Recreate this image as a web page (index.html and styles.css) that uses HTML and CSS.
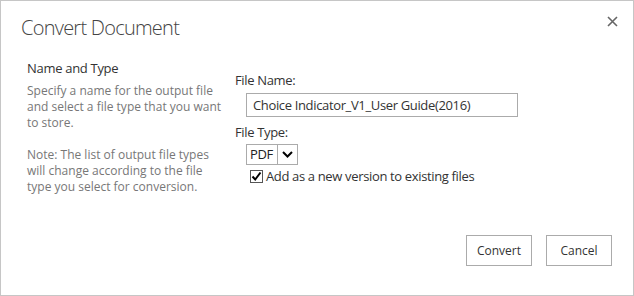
FILE: index.html
```html
<!DOCTYPE html>
<html lang="en">
<head>
  <meta charset="utf-8">
  <title>Convert Document</title>
  <link rel="stylesheet" href="styles.css">
</head>
<body>
  <div class="dialog">
    <!-- Header -->
    <div class="dialog-header">
      <h1>Convert Document</h1>
      <button class="close" type="button" aria-label="Close">
        <svg width="11" height="11" viewBox="0 0 11 11"><path d="M1 1L10 10M10 1L1 10" stroke="#666" stroke-width="1.6"/></svg>
      </button>
    </div>

    <!-- Body -->
    <div class="dialog-body">
      <div class="section-info">
        <h2>Name and Type</h2>
        <p>Specify a name for the output file and select a file type that you want to store.</p>
        <p>Note: The list of output file types will change according to the file type you select for conversion.</p>
      </div>
      <div class="section-fields">
        <label class="field-label" for="file-name">File Name:</label>
        <input id="file-name" class="text-input" type="text" value="Choice Indicator_V1_User Guide(2016)">
        <label class="field-label" for="file-type">File Type:</label>
        <div class="select">
          <span class="select-value">PDF</span>
          <span class="select-arrow">
            <svg width="11" height="7" viewBox="0 0 11 7"><path d="M1 1L5.5 5.5L10 1" fill="none" stroke="#000" stroke-width="2"/></svg>
          </span>
        </div>
        <label class="check">
          <span class="check-box">
            <svg width="11" height="11" viewBox="0 0 11 11"><path d="M1.5 5.5L4.2 8.5L9.5 1.5" fill="none" stroke="#000" stroke-width="2"/></svg>
          </span>
          Add as a new version to existing files
        </label>
      </div>
    </div>

    <!-- Footer -->
    <div class="dialog-footer">
      <button class="btn" type="button">Convert</button>
      <button class="btn" type="button">Cancel</button>
    </div>
  </div>
</body>
</html>
```

FILE: styles.css
```css
:root {
  --text: #333;
  --muted: #777;
  --border: #ababab;
  --font: 'Open Sans', 'Noto Sans', sans-serif;
}
*, *::before, *::after { box-sizing: border-box; }
body { margin: 0; font-family: var(--font); color: var(--text); background: #fff; }
.dialog { width: 634px; height: 296px; border: 1px solid #c6c6c6; display: flex; flex-direction: column; }
.dialog-header { display: flex; justify-content: space-between; align-items: flex-start; padding: 12px 15px 0 20px; }
h1 { margin: 0; font-size: 20px; font-weight: 300; color: #444; line-height: 30px; letter-spacing: -0.75px; }
.close { border: none; background: none; padding: 0; margin-top: 3px; width: 11px; height: 11px; cursor: pointer; }
.close svg { display: block; }
.dialog-body { display: flex; padding: 16px 0 0 26px; }
.section-info { width: 200px; margin-right: 8px; }
h2 { margin: 0 0 6px; font-size: 13px; font-weight: 400; color: var(--text); line-height: 18px; letter-spacing: -0.3px; }
.section-info p { margin: 0 0 16px; font-size: 12px; line-height: 16px; color: var(--muted); }
.section-fields { padding-top: 12px; display: flex; flex-direction: column; align-items: flex-start; letter-spacing: -0.35px; }
.field-label { font-size: 13px; line-height: 18px; color: var(--text); }
.text-input { margin: 4px 0 6px 11px; width: 272px; height: 24px; border: 1px solid var(--border); padding: 0 6px; font: 13px var(--font); letter-spacing: -0.35px; color: var(--text); }
.select { margin: 3px 0 0 11px; display: flex; height: 21px; border: 1px solid var(--border); }
.select-value { font-size: 13px; line-height: 19px; padding: 0 3px; width: 30px; color: #222; }
.select-arrow { width: 20px; border-left: 1px solid var(--border); display: flex; align-items: center; justify-content: center; }
.check { margin: 4px 0 0 15px; display: flex; align-items: center; gap: 3px; font-size: 13px; line-height: 15px; }
.check-box { width: 13px; height: 13px; border: 1px solid #555; display: flex; align-items: center; justify-content: center; }
.dialog-footer { margin-top: auto; display: flex; justify-content: flex-end; gap: 14px; padding: 0 21px 29px; }
.btn { width: 66px; height: 31px; border: 1px solid var(--border); background: #fff; font: 12px var(--font); color: var(--text); cursor: pointer; }
```
